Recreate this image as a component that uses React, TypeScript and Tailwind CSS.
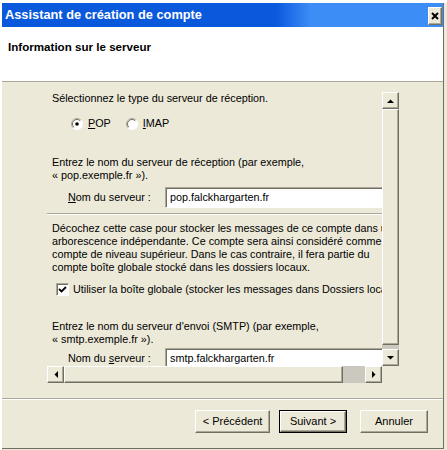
const raised =
  'border border-t-white border-l-white border-r-[#716F64] border-b-[#716F64] shadow-[inset_-1px_-1px_#ACA899] bg-[#ECE9D8]';

const Arrow = ({ dir }: { dir: 'up' | 'down' | 'left' | 'right' }) => {
  const d = {
    up: 'M0 4 L3.5 0.5 L7 4 Z',
    down: 'M0 0 L7 0 L3.5 3.5 Z',
    left: 'M4 0 L4 7 L0.5 3.5 Z',
    right: 'M0 0 L3.5 3.5 L0 7 Z',
  }[dir];
  const vertical = dir === 'up' || dir === 'down';
  return (
    <svg width={vertical ? 7 : 4} height={vertical ? 4 : 7} viewBox={vertical ? '0 0 7 4' : '0 0 4 7'}>
      <path d={d} fill="#000" />
    </svg>
  );
};

const Radio = ({ checked }: { checked?: boolean }) => (
  <svg width="12" height="12" viewBox="0 0 12 12" className="shrink-0">
    <circle cx="6" cy="6" r="5.5" fill="#fff" />
    <path d="M2.1 9.9 A5.5 5.5 0 0 1 9.9 2.1" stroke="#ACA899" fill="none" />
    <path d="M9.9 2.1 A5.5 5.5 0 0 1 2.1 9.9" stroke="#fff" fill="none" />
    <path d="M2.8 9.2 A4.5 4.5 0 0 1 9.2 2.8" stroke="#716F64" fill="none" />
    {checked && <circle cx="6" cy="6" r="1.8" fill="#000" />}
  </svg>
);

const Checkbox = () => (
  <div className="w-[13px] h-[13px] shrink-0 bg-white border border-t-[#ACA899] border-l-[#ACA899] border-r-white border-b-white shadow-[inset_1px_1px_#716F64] flex items-center justify-center">
    <svg width="9" height="9" viewBox="0 0 9 9">
      <path d="M1 4 L3.5 6.5 L8 2" stroke="#000" strokeWidth="1.8" fill="none" />
    </svg>
  </div>
);

const ServerRow = ({ label, value }: { label: React.ReactNode; value: string }) => (
  <div className="flex items-center h-[21px] pl-[21px]">
    <span className="w-[97px] shrink-0 whitespace-nowrap">{label}</span>
    <div className="flex-1 h-[21px] bg-white flex items-center pl-[4px] border border-t-[#ACA899] border-l-[#ACA899] border-b-white border-r-white shadow-[inset_1px_1px_#716F64]">
      {value}
    </div>
  </div>
);

export default function App() {
  return (
    <div className="w-[447px] h-[450px] bg-[#ECE9D8] border-t-[3px] border-l-[2px] border-white font-['Liberation_Sans',Arial,sans-serif] text-black overflow-hidden">
      <div className="w-[442px] h-[446px] flex flex-col border-r border-b border-[#716F64] bg-[#ECE9D8]">
        {/* title bar */}
        <div className="h-[24px] shrink-0 flex items-center justify-between pl-[3px] pr-[1px] bg-[linear-gradient(to_right,#0A58DC_0%,#0A58DC_62%,#3C8DF6_70%,#3C8DF6_100%)]">
          <span className="text-white font-bold text-[12.8px] leading-[16px] whitespace-nowrap">
            Assistant de création de compte
          </span>
          <div className={`w-[14px] h-[18px] mt-[2px] flex items-center justify-center ${raised}`}>
            <svg width="8" height="8" viewBox="0 0 8 8">
              <path d="M1 1 L7 7 M7 1 L1 7" stroke="#000" strokeWidth="2" />
            </svg>
          </div>
        </div>

        {/* header */}
        <div className="h-[55px] shrink-0 bg-white border-b border-[#ACA899] pl-[6px] pt-[13px]">
          <p className="font-bold text-[11.6px] leading-[14px]">Information sur le serveur</p>
        </div>

        {/* scrolled panel */}
        <div className="ml-[45px] mt-[10px] w-[352px] h-[291px] grid grid-cols-[335px_17px] grid-rows-[274px_17px] text-[10.8px] leading-[13px]">
          <div className="overflow-hidden">
            <div className="w-[440px]">
              <p className="pl-[5px] whitespace-nowrap">Sélectionnez le type du serveur de réception.</p>

              <div className="mt-[12px] h-[13px] flex items-center pl-[24px]">
                <Radio checked />
                <span className="ml-[5px]">
                  <u>P</u>OP
                </span>
                <span className="ml-[15px]">
                  <Radio />
                </span>
                <span className="ml-[5px]">
                  <u>I</u>MAP
                </span>
              </div>

              <p className="mt-[26px] pl-[5px] whitespace-nowrap">
                Entrez le nom du serveur de réception (par exemple,
                <br />« pop.exemple.fr »).
              </p>

              <div className="mt-[5px]">
                <ServerRow
                  label={
                    <>
                      <u>N</u>om du serveur :
                    </>
                  }
                  value="pop.falckhargarten.fr"
                />
              </div>

              <div className="mt-[5px] border-t border-[#ACA899] border-b border-b-white" />

              <p className="mt-[7px] pl-[5px] whitespace-nowrap">
                Décochez cette case pour stocker les messages de ce compte dans une
                <br />
                arborescence indépendante. Ce compte sera ainsi considéré comme un
                <br />
                compte de niveau supérieur. Dans le cas contraire, il fera partie du
                <br />
                compte boîte globale stocké dans les dossiers locaux.
              </p>

              <div className="mt-[9px] h-[13px] flex items-center pl-[9px] gap-[4px] whitespace-nowrap">
                <Checkbox />
                <span>Utiliser la boîte globale (stocker les messages dans Dossiers locaux)</span>
              </div>

              <p className="mt-[24px] pl-[5px] whitespace-nowrap">
                Entrez le nom du serveur d'envoi (SMTP) (par exemple,
                <br />« smtp.exemple.fr »).
              </p>

              <div className="mt-[2px]">
                <ServerRow
                  label={
                    <>
                      Nom du <u>s</u>erveur :
                    </>
                  }
                  value="smtp.falckhargarten.fr"
                />
              </div>
            </div>
          </div>

          {/* vertical scrollbar */}
          <div className="flex flex-col bg-[#CBC9BF]">
            <div className={`h-[17px] shrink-0 flex items-center justify-center ${raised}`}>
              <Arrow dir="up" />
            </div>
            <div className={`h-[236px] shrink-0 ${raised}`} />
            <div className="flex-1" />
            <div className={`h-[17px] shrink-0 flex items-center justify-center ${raised}`}>
              <Arrow dir="down" />
            </div>
          </div>

          {/* horizontal scrollbar */}
          <div className="flex bg-[#CBC9BF]">
            <div className={`w-[17px] shrink-0 flex items-center justify-center ${raised}`}>
              <Arrow dir="left" />
            </div>
            <div className={`w-[279px] shrink-0 ${raised}`} />
            <div className="flex-1" />
            <div className={`w-[17px] shrink-0 flex items-center justify-center ${raised}`}>
              <Arrow dir="right" />
            </div>
          </div>
          <div />
        </div>

        {/* bottom separator */}
        <div className="mt-[15px] border-t border-[#ACA899] border-b border-b-white" />

        {/* buttons */}
        <div className="mt-[10px] flex justify-end pr-[15px] text-[11px]">
          <button className={`w-[75px] h-[23px] flex items-center justify-center ${raised}`}>
            &lt; Précédent
          </button>
          <div className="ml-[9px] w-[68px] h-[23px] border border-[#000]">
            <button className={`w-full h-full flex items-center justify-center ${raised}`}>Suivant &gt;</button>
          </div>
          <button className={`ml-[13px] w-[68px] h-[23px] flex items-center justify-center ${raised}`}>
            Annuler
          </button>
        </div>
      </div>
    </div>
  );
}
